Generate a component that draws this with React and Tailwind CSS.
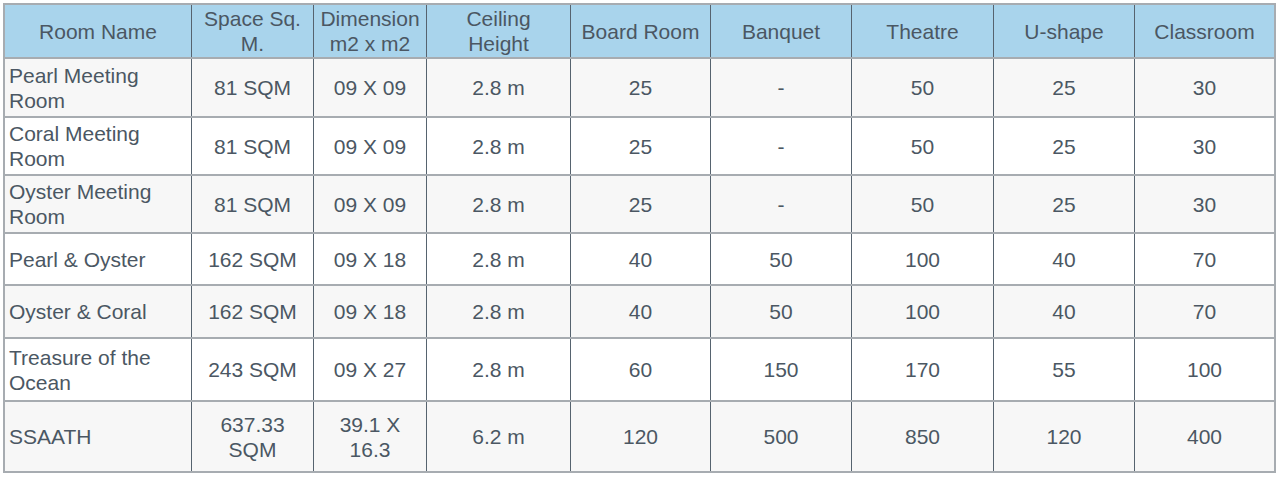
import React from "react";

const widths = ["w-[186px]", "w-[122px]", "w-[113px]", "w-[144px]", "w-[140px]", "w-[141px]", "w-[142px]", "w-[141px]", "w-[140px]"];

const header = [
  "Room Name",
  "Space Sq. M.",
  "Dimension m2 x m2",
  <>
    Ceiling
    <br />
    Height
  </>,
  "Board Room",
  "Banquet",
  "Theatre",
  "U-shape",
  "Classroom",
];

const rows = [
  { h: "h-[59px]", bg: "bg-[#f7f7f7]", c: ["Pearl Meeting Room", "81 SQM", "09 X 09", "2.8 m", "25", "-", "50", "25", "30"] },
  { h: "h-[58px]", bg: "bg-white", c: ["Coral Meeting Room", "81 SQM", "09 X 09", "2.8 m", "25", "-", "50", "25", "30"] },
  { h: "h-[58px]", bg: "bg-[#f7f7f7]", c: ["Oyster Meeting Room", "81 SQM", "09 X 09", "2.8 m", "25", "-", "50", "25", "30"] },
  { h: "h-[52px]", bg: "bg-white", c: ["Pearl & Oyster", "162 SQM", "09 X 18", "2.8 m", "40", "50", "100", "40", "70"] },
  { h: "h-[53px]", bg: "bg-[#f7f7f7]", c: ["Oyster & Coral", "162 SQM", "09 X 18", "2.8 m", "40", "50", "100", "40", "70"] },
  { h: "h-[63px]", bg: "bg-white", c: ["Treasure of the Ocean", "243 SQM", "09 X 27", "2.8 m", "60", "150", "170", "55", "100"] },
  { h: "h-[71px]", bg: "bg-[#f7f7f7]", c: ["SSAATH", "637.33 SQM", "39.1 X 16.3", "6.2 m", "120", "500", "850", "120", "400"] },
];

function Cell({ i, children, head }) {
  const first = i === 0;
  return (
    <div
      className={[
        widths[i],
        "shrink-0 flex items-center leading-[25px]",
        first ? (head ? "justify-center text-center" : "justify-start text-left pl-[4px] pr-2") : "justify-center text-center px-[6px] border-l border-[#56636f]",
      ].join(" ")}
    >
      <span>{children}</span>
    </div>
  );
}

export default function App() {
  return (
    <div className="w-[1280px] h-[477px] bg-white pt-[3px] pl-[3px]" style={{ fontFamily: '"Liberation Sans", Arial, sans-serif' }}>
      <div className="w-[1273px] border-2 border-[#a7acb1] text-[21px] text-[#4b5763]">
        <div className="flex h-[52px] bg-[#a9d4ec]">
          {header.map((t, i) => (
            <Cell key={i} i={i} head>
              {t}
            </Cell>
          ))}
        </div>
        {rows.map((r, ri) => (
          <div key={ri} className={["flex border-t-2 border-[#a7acb1]", r.h, r.bg].join(" ")}>
            {r.c.map((t, i) => (
              <Cell key={i} i={i}>
                {t}
              </Cell>
            ))}
          </div>
        ))}
      </div>
    </div>
  );
}
